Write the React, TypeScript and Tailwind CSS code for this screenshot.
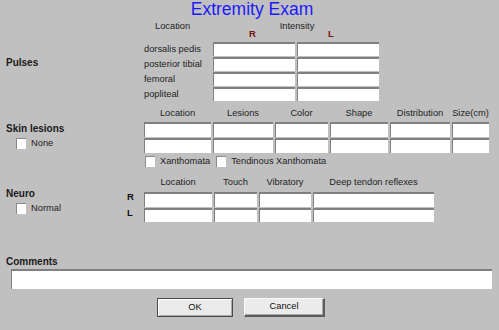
import type { ReactNode } from "react";

const pulseRows = ["dorsalis pedis", "posterior tibial", "femoral", "popliteal"];

const skinCols = [
  { label: "Location", w: "w-[67px]" },
  { label: "Lesions", w: "w-[60px]" },
  { label: "Color", w: "w-[53px]" },
  { label: "Shape", w: "w-[58px]" },
  { label: "Distribution", w: "w-[60px]" },
  { label: "Size(cm)", w: "w-[37px]" },
];

const neuroCols = [
  { label: "Location", w: "w-[68px]" },
  { label: "Touch", w: "w-[43px]" },
  { label: "Vibratory", w: "w-[52px]" },
  { label: "Deep tendon reflexes", w: "w-[121px]" },
];

function Field({ className }: { className: string }) {
  return (
    <input
      type="text"
      readOnly
      className={`block bg-white border-t-2 border-l border-[#808080] outline-none ${className}`}
    />
  );
}

function Check({ label, className = "" }: { label: string; className?: string }) {
  return (
    <label className={`flex items-center ${className}`}>
      <span className="block w-[10px] h-[11px] bg-white border-t border-l border-[#8a8a8a]" />
      <span className="ml-[5px] leading-[11px]">{label}</span>
    </label>
  );
}

function SectionTitle({ children }: { children: ReactNode }) {
  return <div className="text-[10px] font-bold leading-[12px] text-[#1a1a1a]">{children}</div>;
}

export default function App() {
  return (
    <div className="w-[499px] h-[330px] overflow-hidden bg-[#c0c0c0] text-[#1e1e1e] text-[9.3px] font-['Liberation_Sans',Arial,sans-serif]">
      <h1 className="h-[19px] pl-[5px] text-center text-[17.5px] leading-[19px] text-[#1a1aff]">
        Extremity Exam
      </h1>

      {/* Pulses */}
      <div className="mt-[3px] flex">
        <div className="w-[144px] pl-[6px] pt-[35px]">
          <SectionTitle>Pulses</SectionTitle>
        </div>
        <div>
          <div className="flex h-[8px] leading-[8px]">
            <span className="w-[69px] pl-[11px]">Location</span>
            <span className="w-[168px] text-center">Intensity</span>
          </div>
          <div className="flex h-[8px] leading-[8px] font-bold text-[9.5px] text-[#7a1010]">
            <span className="w-[69px]" />
            <span className="w-[84px] pl-[36px]">R</span>
            <span className="w-[84px] pl-[31px]">L</span>
          </div>
          <div className="mt-[4px]">
            {pulseRows.map((r) => (
              <div key={r} className="flex h-[15px]">
                <span className="w-[69px] leading-[14px]">{r}</span>
                <Field className="w-[82px] h-[14px]" />
                <Field className="ml-[2px] w-[82px] h-[14px]" />
              </div>
            ))}
          </div>
        </div>
      </div>

      {/* Skin lesions */}
      <div className="mt-[7px] flex">
        <div className="w-[144px] pl-[6px] pt-[13.5px]">
          <SectionTitle>Skin lesions</SectionTitle>
          <Check label="None" className="mt-[3px] ml-[10px]" />
        </div>
        <div>
          <div className="flex gap-[2px] h-[9px] leading-[9px]">
            {skinCols.map((c) => (
              <span key={c.label} className={`${c.w} text-center whitespace-nowrap`}>
                {c.label}
              </span>
            ))}
          </div>
          <div className="mt-[4px] flex flex-col gap-[1px]">
            {[0, 1].map((i) => (
              <div key={i} className="flex gap-[2px]">
                {skinCols.map((c) => (
                  <Field key={c.label} className={`${c.w} h-[15px]`} />
                ))}
              </div>
            ))}
          </div>
          <div className="mt-[3px] flex">
            <Check label="Xanthomata" className="ml-[1px]" />
            <Check label="Tendinous Xanthomata" className="ml-[6px]" />
          </div>
        </div>
      </div>

      {/* Neuro */}
      <div className="mt-[11px] flex">
        <div className="w-[120px] pl-[6px] pt-[9.5px]">
          <SectionTitle>Neuro</SectionTitle>
          <Check label="Normal" className="mt-[3px] ml-[10px]" />
        </div>
        <div className="w-[24px] pl-[7px] pt-[11px] font-bold text-[9.5px] text-[#111]">
          <div className="leading-[16px]">R</div>
          <div className="leading-[16px]">L</div>
        </div>
        <div>
          <div className="flex gap-[2px] h-[9px] leading-[9px]">
            {neuroCols.map((c) => (
              <span key={c.label} className={`${c.w} text-center whitespace-nowrap`}>
                {c.label}
              </span>
            ))}
          </div>
          <div className="mt-[5px] flex flex-col gap-[1px]">
            {[0, 1].map((i) => (
              <div key={i} className="flex gap-[2px]">
                {neuroCols.map((c) => (
                  <Field key={c.label} className={`${c.w} h-[14.5px]`} />
                ))}
              </div>
            ))}
          </div>
        </div>
      </div>

      {/* Comments */}
      <div className="mt-[33.5px] pl-[6px]">
        <SectionTitle>Comments</SectionTitle>
      </div>
      <Field className="mt-[1.5px] ml-[11px] w-[481px] h-[20px]" />

      <div className="mt-[9px] flex pl-[157px] gap-[11px]">
        <button className="w-[76px] h-[19px] border border-[#4a4a4a] bg-[#ebebeb] shadow-[inset_1px_1px_0_#ffffff,inset_-1px_-1px_0_#a8a8a8] text-[#111]">
          OK
        </button>
        <button className="w-[81px] h-[19px] border-t border-l border-t-[#fafafa] border-l-[#fafafa] border-r-2 border-b-2 border-r-[#5c5c5c] border-b-[#5c5c5c] bg-[#ececec] shadow-[inset_-1px_-1px_0_#a8a8a8] text-[#111]">
          Cancel
        </button>
      </div>
    </div>
  );
}
